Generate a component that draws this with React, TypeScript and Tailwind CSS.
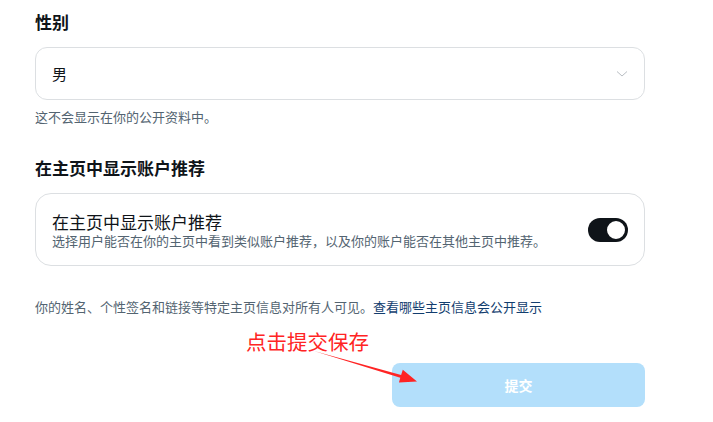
import React from "react";

export default function App() {
  return (
    <div className="relative w-[713px] h-[422px] bg-white overflow-hidden font-['Noto_Sans_CJK_SC',sans-serif] text-[#0f1419]">
      <div className="ml-[35px] w-[610px] flex flex-col pt-[10px]">
        <div className="h-[24px] leading-[24px] text-[17px] font-bold">性别</div>
        <div className="mt-[13px] h-[53px] rounded-[12px] border border-[#dcdfe2] flex items-center justify-between pl-[16px] pr-[16px]">
          <span className="text-[15px] leading-[20px]">男</span>
          <svg width="12" height="8" viewBox="0 0 12 8">
            <path d="M1 1.5 L6 6 L11 1.5" fill="none" stroke="#b9bec3" strokeWidth="1" />
          </svg>
        </div>
        <div className="mt-[8px] h-[18px] leading-[18px] text-[13px] text-[#536471]">这不会显示在你的公开资料中。</div>
        <div className="mt-[30px] h-[24px] leading-[24px] text-[17px] font-bold">在主页中显示账户推荐</div>
        <div className="mt-[13px] h-[73px] rounded-[16px] border border-[#dcdfe2] flex items-center justify-between pl-[16px] pr-[16px]">
          <div className="flex flex-col pt-[1px]">
            <span className="text-[17px] leading-[21px]">在主页中显示账户推荐</span>
            <span className="text-[13px] leading-[17px] text-[#536471]">选择用户能否在你的主页中看到类似账户推荐，以及你的账户能否在其他主页中推荐。</span>
          </div>
          <div className="w-[40px] h-[24px] rounded-full bg-[#0f1419] flex items-center justify-end pr-[1px]">
            <div className="w-[22px] h-[22px] rounded-full bg-white border-2 border-[#0f1419]" />
          </div>
        </div>
        <div className="mt-[32px] h-[18px] leading-[18px] text-[13px] text-[#536471]">
          你的姓名、个性签名和链接等特定主页信息对所有人可见。<span className="text-[#123d6e]">查看哪些主页信息会公开显示</span>
        </div>
        <button className="mt-[47px] self-end w-[253px] h-[44px] rounded-[8px] bg-[#b3dffb] text-white text-[14px] font-bold flex items-center justify-center">
          提交
        </button>
      </div>

      <div className="absolute left-[246px] top-[331px] text-[20.5px] leading-[20px] text-[#ff2424]">点击提交保存</div>
      <svg className="absolute left-0 top-0" width="713" height="422" viewBox="0 0 713 422">
        <polygon
          points="314,351 400.3,377.7 398.9,382.6 417,381.5 402.8,369.8 401.1,374.9"
          fill="#ff2424"
        />
      </svg>
    </div>
  );
}
